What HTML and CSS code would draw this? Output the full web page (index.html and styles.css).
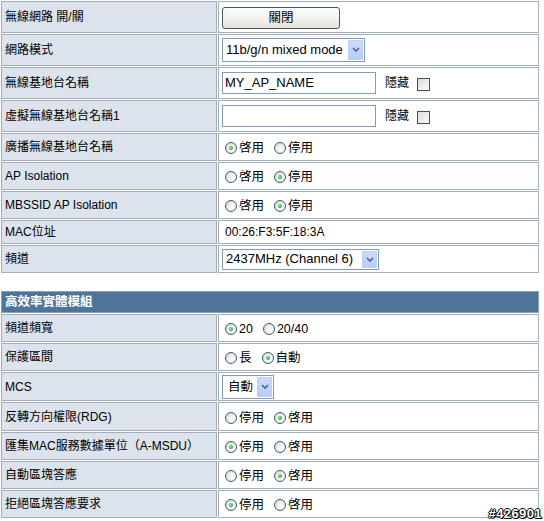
FILE: index.html
```html
<!DOCTYPE html>
<html>
<head>
<meta charset="utf-8">
<title>Wireless</title>
<link rel="stylesheet" href="styles.css">
</head>
<body>
<table class="grid">
  <colgroup><col class="c-lbl"><col class="c-val"></colgroup>
  <tr class="r32">
    <td class="lbl">無線網路 開/關</td>
    <td class="val"><span class="btn">關閉</span></td>
  </tr>
  <tr class="r32">
    <td class="lbl">網路模式</td>
    <td class="val"><span class="sel sel-mode"><span class="sel-text">11b/g/n mixed mode</span><span class="sel-arrow"><svg width="8" height="5" viewBox="0 0 8 5"><path d="M1 1 L4 4 L7 1" fill="none" stroke="#4d6185" stroke-width="1.6"/></svg></span></span></td>
  </tr>
  <tr class="r32">
    <td class="lbl">無線基地台名稱</td>
    <td class="val"><span class="field"><span class="inp">MY_AP_NAME</span><span class="hide-lbl">隱藏</span><span class="chk"></span></span></td>
  </tr>
  <tr class="r32">
    <td class="lbl">虛擬無線基地台名稱1</td>
    <td class="val"><span class="field"><span class="inp"></span><span class="hide-lbl">隱藏</span><span class="chk"></span></span></td>
  </tr>
  <tr class="r28">
    <td class="lbl">廣播無線基地台名稱</td>
    <td class="val"><span class="opts"><span class="opt"><span class="rad on"></span>啓用</span><span class="opt"><span class="rad"></span>停用</span></span></td>
  </tr>
  <tr class="r28">
    <td class="lbl">AP Isolation</td>
    <td class="val"><span class="opts"><span class="opt"><span class="rad"></span>啓用</span><span class="opt"><span class="rad on"></span>停用</span></span></td>
  </tr>
  <tr class="r28">
    <td class="lbl">MBSSID AP Isolation</td>
    <td class="val"><span class="opts"><span class="opt"><span class="rad"></span>啓用</span><span class="opt"><span class="rad on"></span>停用</span></span></td>
  </tr>
  <tr class="r24">
    <td class="lbl">MAC位址</td>
    <td class="val"><span class="mac">00:26:F3:5F:18:3A</span></td>
  </tr>
  <tr class="r28">
    <td class="lbl">頻道</td>
    <td class="val"><span class="sel sel-chan"><span class="sel-text">2437MHz (Channel 6)</span><span class="sel-arrow"><svg width="8" height="5" viewBox="0 0 8 5"><path d="M1 1 L4 4 L7 1" fill="none" stroke="#4d6185" stroke-width="1.6"/></svg></span></span></td>
  </tr>
</table>

<table class="grid grid2">
  <colgroup><col class="c-lbl"><col class="c-val"></colgroup>
  <tr class="r22">
    <td class="hdr" colspan="2">高效率實體模組</td>
  </tr>
  <tr class="r28">
    <td class="lbl">頻道頻寬</td>
    <td class="val"><span class="opts"><span class="opt"><span class="rad on"></span>20</span><span class="opt opt-w"><span class="rad"></span>20/40</span></span></td>
  </tr>
  <tr class="r28">
    <td class="lbl">保護區間</td>
    <td class="val"><span class="opts"><span class="opt"><span class="rad"></span>長</span><span class="opt"><span class="rad on"></span>自動</span></span></td>
  </tr>
  <tr class="r29">
    <td class="lbl">MCS</td>
    <td class="val"><span class="sel sel-mcs"><span class="sel-text cjk">自動</span><span class="sel-arrow"><svg width="8" height="5" viewBox="0 0 8 5"><path d="M1 1 L4 4 L7 1" fill="none" stroke="#4d6185" stroke-width="1.6"/></svg></span></span></td>
  </tr>
  <tr class="r29">
    <td class="lbl">反轉方向權限(RDG)</td>
    <td class="val"><span class="opts"><span class="opt"><span class="rad"></span>停用</span><span class="opt"><span class="rad on"></span>啓用</span></span></td>
  </tr>
  <tr class="r28">
    <td class="lbl">匯集MAC服務數據單位（A-MSDU）</td>
    <td class="val"><span class="opts"><span class="opt"><span class="rad on"></span>停用</span><span class="opt"><span class="rad"></span>啓用</span></span></td>
  </tr>
  <tr class="r28">
    <td class="lbl">自動區塊答應</td>
    <td class="val"><span class="opts"><span class="opt"><span class="rad"></span>停用</span><span class="opt"><span class="rad on"></span>啓用</span></span></td>
  </tr>
  <tr class="r28">
    <td class="lbl">拒絕區塊答應要求</td>
    <td class="val"><span class="opts"><span class="opt"><span class="rad on"></span>停用</span><span class="opt"><span class="rad"></span>啓用</span></span></td>
  </tr>
</table>

<div class="watermark">#426901</div>
</body>
</html>
```

FILE: styles.css
```css
* { box-sizing: border-box; }
html, body { margin: 0; padding: 0; background: #fff; }
body {
  font-family: "Liberation Sans", "Noto Sans CJK TC", sans-serif;
  font-size: 12px;
  color: #000;
  width: 544px;
  height: 521px;
  position: relative;
  overflow: hidden;
}

.grid {
  border-collapse: separate;
  border-spacing: 1px;
  width: 540px;
  table-layout: fixed;
}
.grid2 { margin-top: 16px; }
.c-lbl { width: 216px; }
.c-val { width: 321px; }

.grid td {
  border: 1px solid #a3aebb;
  padding: 0 3px;
  vertical-align: middle;
  white-space: nowrap;
  line-height: 14px;
}
.lbl { background: #dce3ec; }
.val { background: #fff; }

.r32 td { height: 32px; }
.r28 td { height: 28px; }
.r29 td { height: 29px; }
.r24 td { height: 24px; }
.r22 td { height: 22px; }

.hdr {
  background: #4e7499;
  color: #fff;
  font-weight: bold;
  font-size: 12.5px;
}
.grid td.hdr { border-color: #8ca0b4; }

/* button */
.btn {
  display: inline-flex;
  align-items: center;
  justify-content: center;
  width: 118px;
  height: 22px;
  margin-top: 2px;
  border: 1px solid #44546a;
  border-radius: 3px;
  background: linear-gradient(#fdfdfb, #f1f0ea 60%, #e4e2d8);
  font-size: 12.5px;
}

/* select */
.sel {
  display: inline-flex;
  align-items: center;
  border: 1px solid #7f9db9;
  background: #fff;
  padding: 1px 1px 1px 2px;
  font-size: 13px;
  vertical-align: middle;
}
.sel-text { flex: 1; padding-left: 1px; }
.sel-arrow {
  display: inline-flex;
  align-items: center;
  justify-content: center;
  width: 15px;
  align-self: stretch;
  background: linear-gradient(#cddbfb, #b6cbf5);
  border: 1px solid #bccff6;
  border-radius: 1px;
}
.sel-mode { width: 143px; height: 24px; margin-top: -1px; }
.sel-chan { width: 157px; height: 21px; }
.sel-mcs { width: 52px; height: 24px; }
.cjk { font-size: 12.5px; padding-left: 3px; }

/* text input + checkbox */
.field { display: inline-flex; align-items: center; vertical-align: middle; }
.inp {
  display: inline-flex;
  align-items: center;
  width: 154px;
  height: 22px;
  border: 1px solid #7f9db9;
  padding-left: 2px;
  font-size: 13px;
}
.hide-lbl { margin-left: 9px; font-size: 12px; }
.chk {
  width: 13px;
  height: 13px;
  margin-left: 8px;
  margin-top: 2px;
  border: 1px solid #3b4f66;
  background: linear-gradient(135deg, #dcdcd6, #fbfbf9);
}

/* radios */
.opts { display: inline-flex; align-items: center; vertical-align: middle; margin-top: 2px; font-size: 12.5px; }
.opt { display: inline-flex; align-items: center; margin-right: 7px; }
.rad {
  width: 12px;
  height: 12px;
  margin: 0 2px 0 3px;
  border: 1px solid #3d5a7a;
  border-radius: 50%;
  background: radial-gradient(circle at 65% 65%, #ffffff 0%, #eeeeea 45%, #d4d4cc 100%);
  position: relative;
}
.rad.on::after {
  content: "";
  position: absolute;
  left: 3px;
  top: 3px;
  width: 4px;
  height: 4px;
  border-radius: 50%;
  background: radial-gradient(circle at 40% 40%, #9be29b, #2fa52f 70%);
}

.mac { margin-left: 3px; font-size: 12px; }

.watermark {
  position: absolute;
  right: 2px;
  bottom: 1px;
  font-family: "Liberation Sans", sans-serif;
  font-weight: bold;
  font-size: 13px;
  letter-spacing: 0.4px;
  line-height: 13px;
  color: #fff;
  text-shadow: -1px 0 #000, 1px 0 #000, 0 -1px #000, 0 1px #000, 1px 1px #000;
}
```
